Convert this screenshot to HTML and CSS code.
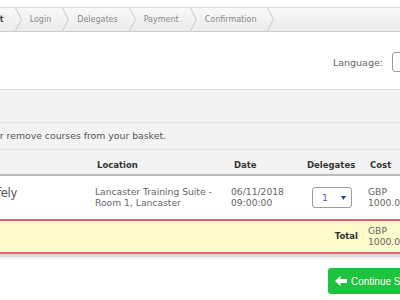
FILE: index.html
```html
<!DOCTYPE html>
<html lang="en">
<head>
<meta charset="utf-8">
<title>Basket</title>
<link rel="stylesheet" href="styles.css">
</head>
<body>
<div class="page">
  <nav class="crumbs">
    <span class="crumb current">Basket</span><svg class="chev" viewBox="0 0 7 23"><polyline points="0.5,0 6.5,11.5 0.5,23" fill="none" stroke="#c8c8c8"/></svg>
    <span class="crumb">Login</span><svg class="chev" viewBox="0 0 7 23"><polyline points="0.5,0 6.5,11.5 0.5,23" fill="none" stroke="#c8c8c8"/></svg>
    <span class="crumb">Delegates</span><svg class="chev" viewBox="0 0 7 23"><polyline points="0.5,0 6.5,11.5 0.5,23" fill="none" stroke="#c8c8c8"/></svg>
    <span class="crumb">Payment</span><svg class="chev" viewBox="0 0 7 23"><polyline points="0.5,0 6.5,11.5 0.5,23" fill="none" stroke="#c8c8c8"/></svg>
    <span class="crumb">Confirmation</span><svg class="chev" viewBox="0 0 7 23"><polyline points="0.5,0 6.5,11.5 0.5,23" fill="none" stroke="#c8c8c8"/></svg>
  </nav>

  <header class="top">
    <span class="lang-label">Language:</span>
    <span class="lang-select"></span>
  </header>

  <section class="panel">
    <div class="panel-head"></div>
    <div class="intro">Please review or remove courses from your basket.</div>
    <table class="basket">
      <colgroup>
        <col class="c-course"><col class="c-loc"><col class="c-date"><col class="c-del"><col class="c-cost">
      </colgroup>
      <thead>
        <tr>
          <th>Course</th>
          <th>Location</th>
          <th class="th-date">Date</th>
          <th class="th-del">Delegates</th>
          <th>Cost</th>
        </tr>
      </thead>
      <tbody>
        <tr class="item">
          <td class="course">Working at Height Safely</td>
          <td>Lancaster Training Suite -<br>Room 1, Lancaster</td>
          <td>06/11/2018<br>09:00:00</td>
          <td class="del"><span class="qty"><span class="qty-val">1</span><svg class="qty-arrow" viewBox="0 0 5 4"><polygon points="0,0 5,0 2.5,4" fill="#2b3d8a"/></svg></span></td>
          <td>GBP<br>1000.00</td>
        </tr>
        <tr class="total">
          <td class="total-label" colspan="4">Total</td>
          <td>GBP<br>1000.00</td>
        </tr>
      </tbody>
    </table>
  </section>

  <div class="actions">
    <a class="btn-continue" href="#"><svg class="btn-arrow" viewBox="0 0 12 10"><path d="M0 5 L5.5 0 L5.5 3 L12 3 L12 7 L5.5 7 L5.5 10 Z" fill="#fff"/></svg><span>Continue Shopping</span></a>
  </div>
</div>
</body>
</html>
```

FILE: styles.css
```css
html, body {
  margin: 0;
  padding: 0;
}
body {
  width: 400px;
  height: 300px;
  overflow: hidden;
  background: #fff;
  font-family: "DejaVu Sans", sans-serif;
  color: #555;
}
.page {
  width: 720px;
  margin-left: -200px;
}

/* breadcrumb */
.crumbs {
  margin-top: 7px;
  height: 23px;
  border-top: 1px solid #d9d9d9;
  border-bottom: 1px solid #cfcfcf;
  background: linear-gradient(#f9f9f9, #eaeaea);
  display: flex;
  align-items: center;
  padding-left: 173px;
  font-size: 8px;
  color: #8a8a8a;
}
.crumb {
  margin-right: 11px;
  white-space: nowrap;
}
.crumb.current {
  font-weight: bold;
  color: #444;
}
.chev {
  flex: none;
  width: 7px;
  height: 23px;
  margin-right: 8px;
}

/* language */
.top {
  display: flex;
  justify-content: flex-end;
  align-items: center;
  padding: 20px 20px 17px;
}
.lang-label {
  font-size: 9.5px;
  color: #666;
  margin-right: 9px;
}
.lang-select {
  width: 108px;
  height: 20px;
  box-sizing: border-box;
  border: 1px solid #999;
  border-radius: 3px;
  background: #fff;
}

/* panel */
.panel {
  border-top: 1px solid #dcdcdc;
  border-bottom: 3px solid #dadada;
  background: #f3f3f3;
  box-shadow: 0 2px 3px rgba(0, 0, 0, 0.08);
}
.panel-head {
  height: 32px;
  border-bottom: 1px solid #e3e3e3;
}
.intro {
  height: 26px;
  line-height: 26px;
  font-size: 9.3px;
  color: #555;
  text-align: right;
  padding-right: 354px;
  white-space: nowrap;
  border-bottom: 1px solid #e3e3e3;
}

/* table */
.basket {
  width: 720px;
  table-layout: fixed;
  border-collapse: separate;
  border-spacing: 0;
}
.c-course { width: 288px; }
.c-loc { width: 136px; }
.c-date { width: 76px; }
.c-del { width: 61px; }
.c-cost { width: 159px; }

.basket th {
  text-align: left;
  font-size: 8.5px;
  font-weight: bold;
  color: #333;
  line-height: 10px;
  padding: 10px 0 4px 9px;
  border-bottom: 2px solid #bdbdbd;
  white-space: nowrap;
}
.basket th.th-date { padding-left: 10px; }
.basket th.th-del { padding-left: 7px; }

.basket td {
  vertical-align: top;
  font-size: 9.2px;
  line-height: 11px;
  color: #666;
  white-space: nowrap;
  overflow: hidden;
}
.item td {
  background: #fff;
  padding: 10px 7px 11px;
}
.item td.course {
  font-size: 11.5px;
  line-height: 14px;
  letter-spacing: -0.3px;
  color: #555;
  text-align: right;
  padding-right: 71px;
}
.item td.del {
  padding: 11px 0 0 12px;
}
.qty {
  display: inline-flex;
  align-items: center;
  justify-content: space-between;
  width: 40px;
  height: 21px;
  box-sizing: border-box;
  border: 1px solid #9a9a9a;
  border-radius: 3px;
  padding: 0 5px 0 9px;
  background: #fff;
}
.qty-val {
  color: #5a5aa8;
  font-size: 9.5px;
}
.qty-arrow {
  width: 5px;
  height: 4px;
}

.total td {
  background: #fdfacc;
  border-top: 2px solid #dc6478;
  border-bottom: 2px solid #dc6478;
  padding: 4px 7px 5px;
}
.total td.total-label {
  vertical-align: middle;
  text-align: right;
  padding-right: 3px;
  font-weight: bold;
  font-size: 8.5px;
  color: #333;
}

/* actions */
.actions {
  margin-top: 11px;
  padding-left: 528px;
}
.btn-continue {
  display: inline-flex;
  align-items: center;
  height: 26px;
  padding: 0 10px 0 7px;
  background: #1fc23c;
  border-radius: 3px;
  color: #fff;
  text-decoration: none;
  font-family: "Liberation Sans", Arial, sans-serif;
  font-size: 10px;
  white-space: nowrap;
}
.btn-arrow {
  width: 12px;
  height: 10px;
  margin-right: 4px;
}
```
